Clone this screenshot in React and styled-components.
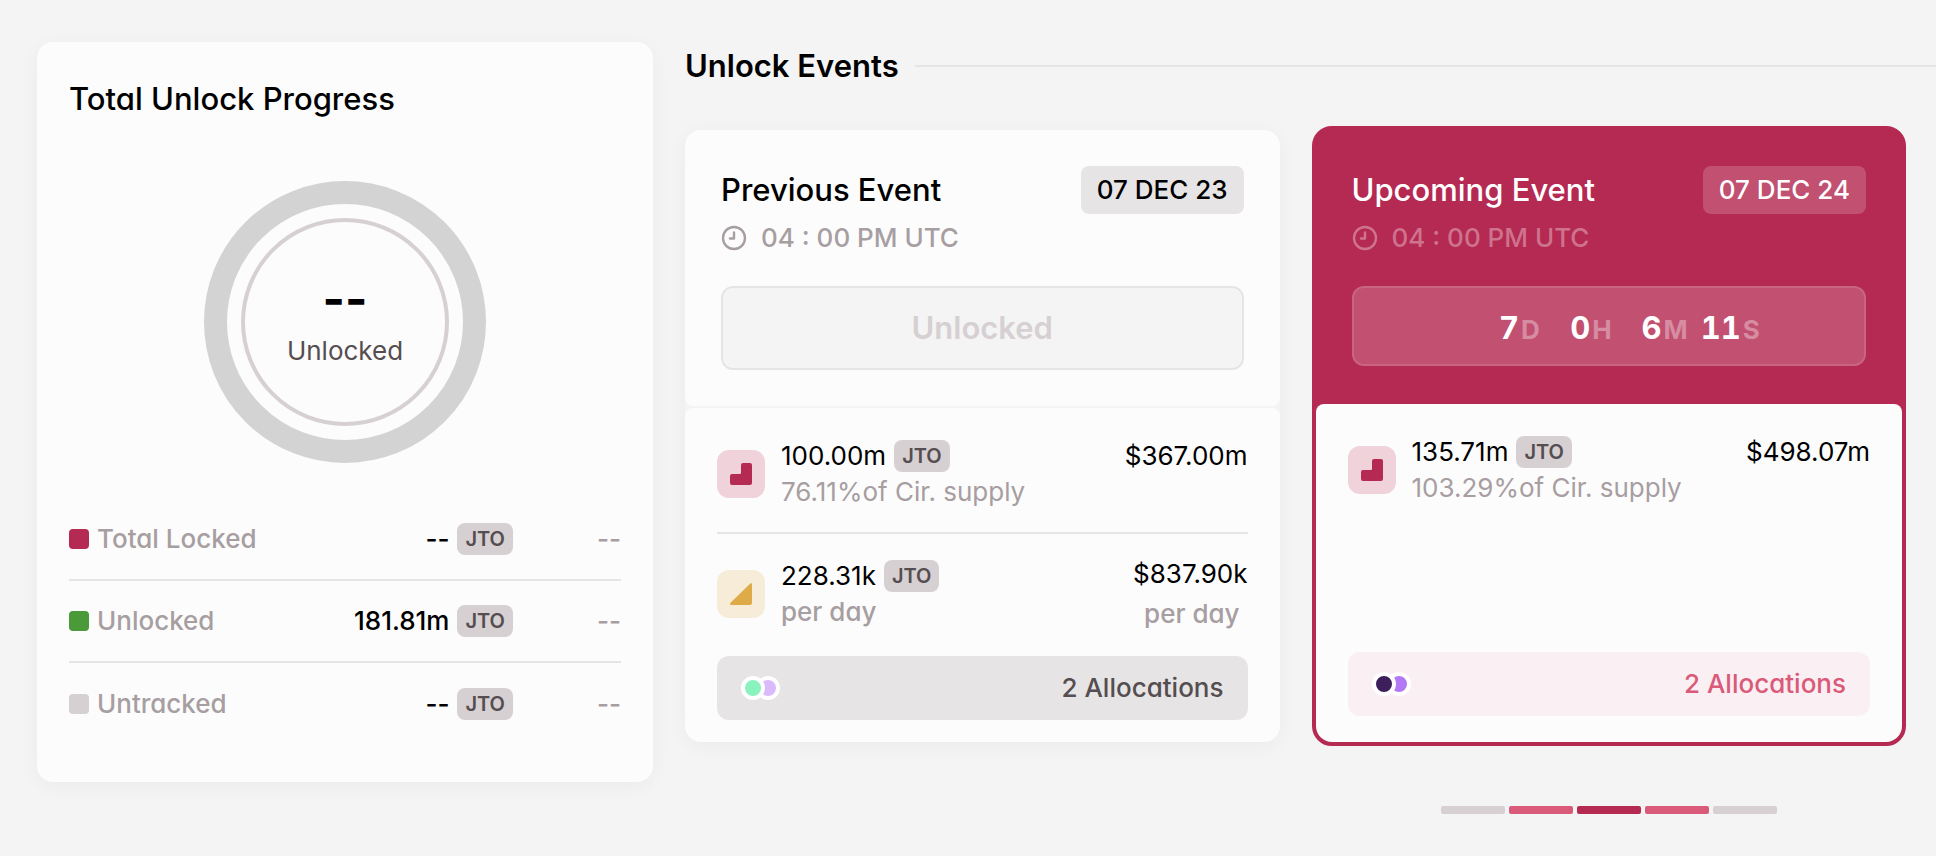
import React from "react";
import styled, { createGlobalStyle, css } from "styled-components";

const COLORS = {
  page: "#f4f4f4",
  card: "#fcfcfc",
  primary: "#b52a52",
  primaryLight: "#da5a7a",
  green: "#4a9a3a",
  black: "#000000",
  gray800: "#554d50",
  gray500: "#a79ea1",
  gray300: "#d6d0d2",
  gray200: "#e6e4e5",
  ring: "#d3d3d3",
};

const GlobalStyle = createGlobalStyle`
  *,
  *::before,
  *::after {
    box-sizing: border-box;
  }

  html {
    background: ${COLORS.page};
  }

  body {
    margin: 0;
    overflow-x: hidden;
    font-family: Inter, "Liberation Sans", sans-serif;
    font-size: 26px;
    line-height: 36px;
    font-feature-settings: "cv11" 1;
    color: ${COLORS.black};
  }

  h2, h3, p {
    margin: 0;
  }

  button {
    font: inherit;
    font-feature-settings: inherit;
    border: none;
    cursor: pointer;
  }
`;

const cardShadow = css`
  box-shadow: 0 4px 20px rgba(0, 0, 0, 0.04);
`;

const PreviousPanel = styled.div`
  width: 63%;
  height: 0;
  margin-left: 37px;
  ${cardShadow}
`;

const Page = styled.main`
  display: grid;
  grid-template-columns: 616fr 1251fr;
  align-items: start;
  gap: 32px;
  padding: 42px 0 40px 37px;
`;

const ProgressCard = styled.section`
  padding: 37px 32px 38px;
  border-radius: 16px;
  background: ${COLORS.card};
  ${cardShadow}
`;

const Title = styled.h2`
  font-size: 31px;
  line-height: 40px;
  font-weight: ${({ $weight }) => $weight || 500};
  white-space: nowrap;
`;

const Donut = styled.div`
  display: grid;
  place-items: center;
  width: 282px;
  height: 282px;
  margin: 62px auto 35px;
  border: 23px solid ${COLORS.ring};
  border-radius: 50%;
`;

const DonutCenter = styled.div`
  display: flex;
  flex-direction: column;
  align-items: center;
  justify-content: center;
  gap: 10px;
  width: 208px;
  height: 208px;
  border: 4px solid ${COLORS.gray300};
  border-radius: 50%;
  color: ${COLORS.gray800};
`;

const DonutValue = styled.strong`
  font-size: 48px;
  line-height: 48px;
  font-weight: 700;
  color: ${COLORS.black};
`;

const BreakdownTable = styled.table`
  width: 100%;
  border-collapse: collapse;

  tr + tr {
    border-top: 2px solid ${COLORS.gray200};
  }
`;

const BreakdownCell = styled.td`
  width: ${({ $width }) => $width || "auto"};
  height: 82px;
  padding: 0;
  text-align: ${({ $align }) => $align || "left"};
  font-weight: 500;
  color: ${COLORS.gray500};
`;

const Legend = styled.span`
  display: flex;
  align-items: center;
  gap: 8px;

  &::before {
    content: "";
    width: 20px;
    height: 20px;
    border-radius: 4px;
    background: ${({ $color }) => $color};
  }
`;

const Amount = styled.span`
  display: flex;
  align-items: center;
  justify-content: ${({ $end }) => ($end ? "flex-end" : "flex-start")};
  gap: 8px;
  color: ${COLORS.black};
`;

const Ticker = styled.span`
  padding: 0 8px;
  border-radius: 8px;
  background: ${COLORS.gray300};
  font-size: 20px;
  line-height: 32px;
  font-weight: 600;
  color: ${COLORS.gray800};
`;

const Events = styled.section`
  min-width: 0;
  padding-top: 4px;
`;

const EventsHeading = styled.div`
  display: flex;
  align-items: center;
  gap: 16px;

  &::after {
    content: "";
    flex: 1;
    height: 2px;
    background: ${COLORS.gray200};
  }
`;

const EventList = styled.div`
  display: grid;
  grid-template-columns: 1fr 1fr;
  align-items: center;
  gap: 32px;
  padding: 40px 30px 0 0;
`;

const EventCard = styled.article`
  display: flex;
  flex-direction: column;
  gap: ${({ $active }) => ($active ? 0 : 2)}px;
  border: ${({ $active }) => ($active ? 4 : 0)}px solid ${COLORS.primary};
  border-radius: ${({ $active }) => ($active ? 20 : 16)}px;
  background: ${({ $active }) => ($active ? COLORS.primary : COLORS.page)};
  ${({ $active }) => !$active && cardShadow}
`;

const EventHeader = styled.header`
  display: grid;
  grid-template-columns: 1fr auto;
  align-items: center;
  padding: 36px;
  border-radius: 16px 16px 8px 8px;
  background: ${COLORS.card};

  ${({ $active }) =>
    $active &&
    css`
      padding-bottom: 38px;
      background: none;
      color: #ffffff;
    `}
`;

const DateTag = styled.time`
  padding: 0 16px;
  border-radius: 8px;
  background: ${({ $active }) =>
    $active ? "rgba(255, 255, 255, 0.18)" : COLORS.gray200};
  line-height: 48px;
  font-weight: 500;
`;

const TimeRow = styled.p`
  grid-column: 1 / -1;
  display: flex;
  align-items: center;
  gap: 14px;
  margin-top: 6px;
  font-weight: 500;
  color: ${({ $active }) =>
    $active ? "rgba(255, 255, 255, 0.35)" : COLORS.gray500};
`;

const StatusBox = styled.div`
  grid-column: 1 / -1;
  display: flex;
  align-items: center;
  justify-content: center;
  height: ${({ $active }) => ($active ? 80 : 84)}px;
  margin-top: 30px;
  border: 2px solid
    ${({ $active }) => ($active ? "rgba(255, 255, 255, 0.28)" : COLORS.gray200)};
  border-radius: 12px;
  background: ${({ $active }) =>
    $active ? "rgba(255, 255, 255, 0.18)" : COLORS.page};
  background-clip: padding-box;
  font-size: 31px;
  font-weight: 600;
  color: ${({ $active }) => ($active ? "#ffffff" : COLORS.gray300)};
`;

const Countdown = styled.div`
  display: grid;
  grid-template-columns: 82px 72px 76px 72px;
  padding-top: 4px;
  font-weight: 700;
  font-variant-numeric: tabular-nums;
`;

const CountdownUnit = styled.span`
  display: flex;
  align-items: baseline;
  justify-content: flex-end;
  gap: 2px;

  small {
    font-size: 26px;
    line-height: 26px;
    color: rgba(255, 255, 255, 0.35);
  }
`;

const EventBody = styled.div`
  display: flex;
  flex-direction: column;
  min-height: ${({ $active }) => ($active ? 338 : 334)}px;
  padding: 0 32px ${({ $active }) => ($active ? 26 : 22)}px;
  border-radius: 8px 8px 16px 16px;
  background: ${COLORS.card};
`;

const UnlockRow = styled.div`
  display: grid;
  grid-template-columns: 48px 1fr auto;
  align-items: center;
  column-gap: 16px;
  padding: 30px 0 22px;

  & + & {
    padding-bottom: 0;
    padding-top: 22px;
    border-top: 2px solid ${COLORS.gray200};
  }
`;

const UnlockIcon = styled.span`
  display: grid;
  place-items: center;
  width: 48px;
  height: 48px;
  border-radius: 12px;
  background: ${({ $linear }) => ($linear ? "#f7ecd8" : "#efd2da")};
`;

const SubText = styled.p`
  font-weight: ${({ $weight }) => $weight || 400};
  color: ${COLORS.gray500};
`;

const Price = styled.div`
  display: grid;
  align-self: start;
  gap: 4px;
  text-align: right;

  ${SubText} {
    padding-right: 8px;
  }
`;

const AllocationButton = styled.button`
  display: flex;
  align-items: center;
  justify-content: space-between;
  height: 64px;
  margin-top: auto;
  padding: 0 24px;
  border-radius: 12px;
  background: ${({ $active }) => ($active ? "#faeff2" : COLORS.gray200)};
  font-weight: 500;
  color: ${({ $active }) => ($active ? COLORS.primaryLight : COLORS.gray800)};
`;

const Dots = styled.span`
  display: flex;
`;

const Dot = styled.span`
  z-index: ${({ $front }) => ($front ? 1 : 0)};
  width: 24px;
  height: 24px;
  border: 4px solid #ffffff;
  border-radius: 50%;
  background: ${({ $color }) => $color};

  & + & {
    margin-left: -9px;
  }
`;

const Pager = styled.nav`
  display: grid;
  grid-column: 2;
  grid-template-columns: repeat(5, 64px);
  justify-content: center;
  gap: 4px;
  padding-top: 28px;
`;

const PagerButton = styled.button`
  height: 8px;
  padding: 0;
  border-radius: 2px;
  background: ${({ $color }) => $color};
`;

const ClockIcon = () => (
  <svg width="26" height="26" viewBox="0 0 26 26" fill="none" aria-hidden="true">
    <g
      stroke="currentColor"
      strokeWidth="2.4"
      strokeLinecap="round"
      strokeLinejoin="round"
    >
      <circle cx="13" cy="13" r="11" />
      <path d="M13 7.5v6H9" />
    </g>
  </svg>
);

const CliffIcon = () => (
  <svg width="24" height="24" viewBox="0 0 24 24" aria-hidden="true">
    <path
      fill={COLORS.primary}
      d="M14 1h7a2 2 0 0 1 2 2v18a2 2 0 0 1-2 2H3a2 2 0 0 1-2-2v-7a2 2 0 0 1 2-2h8a1 1 0 0 0 1-1V3a2 2 0 0 1 2-2z"
    />
  </svg>
);

const LinearIcon = () => (
  <svg width="24" height="24" viewBox="0 0 24 24" aria-hidden="true">
    <path
      fill="#dfab49"
      d="M21.3 1.5c.6-.6 1.7-.2 1.7.7V21a2 2 0 0 1-2 2H2.2c-1.1 0-1.6-1.200-.9-2z"
    />
  </svg>
);

const BREAKDOWN = [
  { label: "Total Locked", color: COLORS.primary, amount: "--" },
  { label: "Unlocked", color: COLORS.green, amount: "181.81m" },
  { label: "Untracked", color: COLORS.gray300, amount: "--" },
];

const COUNTDOWN = [
  ["7", "D"],
  ["0", "H"],
  ["6", "M"],
  ["11", "S"],
];

const EVENTS = [
  {
    title: "Previous Event",
    date: "07 DEC 23",
    dots: ["#8af2bd", "#d9bbfb"],
    unlocks: [
      { amount: "100.00m", note: "76.11%of Cir. supply", price: "$367.00m" },
      {
        amount: "228.31k",
        note: "per day",
        price: "$837.90k",
        linear: true,
      },
    ],
  },
  {
    title: "Upcoming Event",
    date: "07 DEC 24",
    active: true,
    dots: ["#3d1f5c", "#b278f5"],
    unlocks: [
      { amount: "135.71m", note: "103.29%of Cir. supply", price: "$498.07m" },
    ],
  },
];

const PAGES = [
  COLORS.gray300,
  COLORS.primaryLight,
  COLORS.primary,
  COLORS.primaryLight,
  COLORS.gray300,
];

const Unlock = ({ amount, note, price, linear }) => (
  <UnlockRow>
    <UnlockIcon $linear={linear}>
      {linear ? <LinearIcon /> : <CliffIcon />}
    </UnlockIcon>
    <div>
      <Amount>
        {amount}
        <Ticker>JTO</Ticker>
      </Amount>
      <SubText $weight={linear ? 500 : 400}>{note}</SubText>
    </div>
    <Price>
      {price}
      {linear && <SubText $weight={500}>{note}</SubText>}
    </Price>
  </UnlockRow>
);

const Event = ({ title, date, active, dots, unlocks }) => (
  <EventCard $active={active}>
    <EventHeader $active={active}>
      <Title as="h3">{title}</Title>
      <DateTag $active={active}>{date}</DateTag>
      <TimeRow $active={active}>
        <ClockIcon />
        04 : 00 PM UTC
      </TimeRow>
      <StatusBox $active={active}>
        {active ? (
          <Countdown>
            {COUNTDOWN.map(([value, unit]) => (
              <CountdownUnit key={unit}>
                {value}
                <small>{unit}</small>
              </CountdownUnit>
            ))}
          </Countdown>
        ) : (
          "Unlocked"
        )}
      </StatusBox>
    </EventHeader>
    <EventBody $active={active}>
      {unlocks.map((unlock) => (
        <Unlock key={unlock.amount} {...unlock} />
      ))}
      <AllocationButton type="button" $active={active}>
        <Dots>
          <Dot $color={dots[0]} $front />
          <Dot $color={dots[1]} />
        </Dots>
        2 Allocations
      </AllocationButton>
    </EventBody>
  </EventCard>
);

const App = () => (
  <>
    <GlobalStyle />
    <PreviousPanel />
    <Page>
      <ProgressCard>
        <Title>Total Unlock Progress</Title>
        <Donut>
          <DonutCenter>
            <DonutValue>--</DonutValue>
            Unlocked
          </DonutCenter>
        </Donut>
        <BreakdownTable>
          <tbody>
            {BREAKDOWN.map(({ label, color, amount }) => (
              <tr key={label}>
                <BreakdownCell as="th" scope="row">
                  <Legend $color={color}>{label}</Legend>
                </BreakdownCell>
                <BreakdownCell>
                  <Amount $end>
                    {amount}
                    <Ticker>JTO</Ticker>
                  </Amount>
                </BreakdownCell>
                <BreakdownCell $align="right" $width="108px">
                  --
                </BreakdownCell>
              </tr>
            ))}
          </tbody>
        </BreakdownTable>
      </ProgressCard>
      <Events>
        <EventsHeading>
          <Title $weight={600}>Unlock Events</Title>
        </EventsHeading>
        <EventList>
          {EVENTS.map((event) => (
            <Event key={event.title} {...event} />
          ))}
          <Pager aria-label="Event pages">
            {PAGES.map((color, index) => (
              <PagerButton
                key={index}
                type="button"
                aria-label={`Page ${index + 1}`}
                $color={color}
              />
            ))}
          </Pager>
        </EventList>
      </Events>
    </Page>
  </>
);

export default App;
